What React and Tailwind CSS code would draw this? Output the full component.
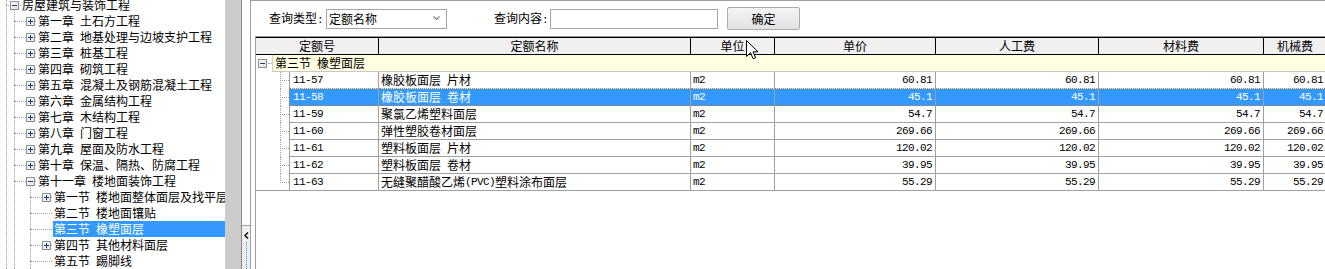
import React from 'react';

const MONO = "font-['Liberation_Mono',monospace] text-[11px] tracking-[-0.6px]";

function Txt({ children }) {
  const parts = String(children).split(/([\x20-\x7e]+)/).filter(Boolean);
  return parts.map((p, i) =>
    /^[\x20-\x7e]+$/.test(p) ? (
      <span key={i} className={`${MONO} whitespace-pre`}>{p}</span>
    ) : (
      <span key={i}>{p}</span>
    )
  );
}

function Box({ minus }) {
  return (
    <svg width="9" height="9" viewBox="0 0 9 9" className="relative shrink-0">
      <defs>
        <linearGradient id="bx" x1="0" y1="0" x2="1" y2="1">
          <stop offset="0" stopColor="#ffffff" />
          <stop offset="1" stopColor="#dcdcdc" />
        </linearGradient>
      </defs>
      <rect x="0.5" y="0.5" width="8" height="8" fill="url(#bx)" stroke="#8e8f8f" />
      <path d="M2 4.5h5" stroke="#1e3d7a" />
      {!minus && <path d="M4.5 2v5" stroke="#1e3d7a" />}
    </svg>
  );
}

const tree = [
  { lv: 0, kind: 'minus', label: '房屋建筑与装饰工程' },
  { lv: 1, kind: 'plus', label: '第一章 土石方工程' },
  { lv: 1, kind: 'plus', label: '第二章 地基处理与边坡支护工程' },
  { lv: 1, kind: 'plus', label: '第三章 桩基工程' },
  { lv: 1, kind: 'plus', label: '第四章 砌筑工程' },
  { lv: 1, kind: 'plus', label: '第五章 混凝土及钢筋混凝土工程' },
  { lv: 1, kind: 'plus', label: '第六章 金属结构工程' },
  { lv: 1, kind: 'plus', label: '第七章 木结构工程' },
  { lv: 1, kind: 'plus', label: '第八章 门窗工程' },
  { lv: 1, kind: 'plus', label: '第九章 屋面及防水工程' },
  { lv: 1, kind: 'plus', label: '第十章 保温、隔热、防腐工程' },
  { lv: 1, kind: 'minus', label: '第十一章 楼地面装饰工程' },
  { lv: 2, kind: 'plus', label: '第一节 楼地面整体面层及找平层' },
  { lv: 2, kind: 'leaf', label: '第二节 楼地面镶贴' },
  { lv: 2, kind: 'leaf', label: '第三节 橡塑面层', sel: true },
  { lv: 2, kind: 'plus', label: '第四节 其他材料面层' },
  { lv: 2, kind: 'leaf', label: '第五节 踢脚线' },
];

function TreeRow({ lv, kind, label, sel }) {
  const pad = ['pl-[10px]', 'pl-[26px]', 'pl-[42px]'][lv];
  const conn = ['left-[6px] w-[15px]', 'left-[14px] w-[24px]', 'left-[30px] w-[24px]'][lv];
  return (
    <div className={`relative h-[16px] flex items-center ${pad}`}>
      <span className={`absolute top-[8px] border-t border-dotted border-[#a0a0a0] ${conn}`} />
      {kind === 'leaf' ? <span className="w-[9px] shrink-0" /> : <Box minus={kind === 'minus'} />}
      <span
        className={`relative ml-[2px] pl-[1px] h-[16px] leading-[16px] whitespace-nowrap ${
          sel ? 'flex-1 bg-[#3399ff] text-white' : 'bg-white text-black'
        }`}
      >
        <Txt>{label}</Txt>
      </span>
    </div>
  );
}

const rows = [
  ['11-57', '橡胶板面层 片材', 'm2', '60.81'],
  ['11-58', '橡胶板面层 卷材', 'm2', '45.1'],
  ['11-59', '聚氯乙烯塑料面层', 'm2', '54.7'],
  ['11-60', '弹性塑胶卷材面层', 'm2', '269.66'],
  ['11-61', '塑料板面层 片材', 'm2', '120.02'],
  ['11-62', '塑料板面层 卷材', 'm2', '39.95'],
  ['11-63', '无缝聚醋酸乙烯(PVC)塑料涂布面层', 'm2', '55.29'],
];

function DataRow({ r, sel, focusBelow, last }) {
  const bb = sel || focusBelow
    ? 'border-b-[#c27a3a] [border-bottom-style:dotted]'
    : 'border-b-[#a0a0a0]';
  const bg = sel ? 'bg-[#3399ff] text-white' : 'bg-white text-black';
  const cell = `h-full shrink-0 border-b border-r border-r-[#a0a0a0] flex items-center ${bb} ${bg}`;
  return (
    <div className="flex h-[17px]">
      <div className={`relative w-[33px] h-full shrink-0 ${last ? 'border-b border-[#a0a0a0]' : ''}`}>
        <span
          className={`absolute left-[24px] top-0 border-l border-dotted border-[#a0a0a0] ${
            last ? 'h-[9px]' : 'h-[17px]'
          }`}
        />
        <span className="absolute left-[24px] top-[8px] w-[9px] border-t border-dotted border-[#a0a0a0]" />
      </div>
      <div
        className={`${cell} w-[90px] border-l pl-[3px] ${
          sel ? 'border-l-[#c27a3a] [border-left-style:dotted]' : 'border-l-[#a0a0a0]'
        }`}
      >
        <Txt>{r[0]}</Txt>
      </div>
      <div className={`${cell} w-[312px] pl-[2px] whitespace-nowrap`}>
        <Txt>{r[1]}</Txt>
      </div>
      <div className={`${cell} w-[84px] pl-[2px]`}>
        <Txt>{r[2]}</Txt>
      </div>
      <div className={`${cell} w-[161px] justify-end pr-[3px]`}>
        <Txt>{r[3]}</Txt>
      </div>
      <div className={`${cell} w-[163px] justify-end pr-[3px]`}>
        <Txt>{r[3]}</Txt>
      </div>
      <div className={`${cell} w-[165px] justify-end pr-[3px]`}>
        <Txt>{r[3]}</Txt>
      </div>
      <div className={`${cell} w-[63px] justify-end pr-[3px]`}>
        <Txt>{r[3]}</Txt>
      </div>
    </div>
  );
}

const headers = [
  ['定额号', 'w-[123px]'],
  ['定额名称', 'w-[312px]'],
  ['单位', 'w-[84px]'],
  ['单价', 'w-[161px]'],
  ['人工费', 'w-[163px]'],
  ['材料费', 'w-[165px]'],
  ['机械费', 'w-[63px]'],
];

export default function App() {
  return (
    <div className="relative w-[1325px] h-[269px] flex overflow-hidden bg-white text-[12px] leading-[16px] text-black font-['Noto_Sans_CJK_SC','Noto_Sans',sans-serif]">
      {/* Left tree */}
      <div className="relative w-[225px] h-full shrink-0 overflow-hidden bg-white">
        <span className="absolute left-[6px] top-0 bottom-0 border-l border-dotted border-[#a0a0a0]" />
        <span className="absolute left-[14px] top-[9px] bottom-0 border-l border-dotted border-[#a0a0a0]" />
        <span className="absolute left-[30px] top-[185px] bottom-0 border-l border-dotted border-[#a0a0a0]" />
        <div className="-mt-[3px]">
          {tree.map((t, i) => (
            <TreeRow key={i} {...t} />
          ))}
        </div>
      </div>

      {/* grey strip */}
      <div className="w-[16px] h-full shrink-0 bg-[#cccccc]" />

      {/* splitter */}
      <div className="w-[10px] h-full shrink-0 flex flex-col border-l border-l-[#8a8a8a] border-r border-r-[#a0a0a0] bg-white">
        <div className="h-[225px] shrink-0" />
        <div className="flex-1 flex flex-col items-center border-t border-[#a0a0a0] bg-[#efefef]">
          <svg width="5" height="7" viewBox="0 0 5 7" className="mt-[6px]">
            <path d="M4 0.5L1 3.5L4 6.5" fill="none" stroke="#000" strokeWidth="1.4" />
          </svg>
          <div className="mt-[3px] flex-1 border-l border-dotted border-[#3399ff]" />
        </div>
      </div>

      {/* Right panel */}
      <div className="flex-1 min-w-0 h-full flex flex-col border-t border-[#a0a0a0] overflow-hidden">
        <div className="h-[35px] shrink-0 flex items-center">
          <span className="ml-[18px] w-[57px] shrink-0 whitespace-nowrap">
            <Txt>查询类型:</Txt>
          </span>
          <div className="w-[121px] h-[20px] shrink-0 border border-[#a5a5a5] bg-white flex items-center pl-[2px] pr-[6px]">
            <span className="flex-1">定额名称</span>
            <svg width="7" height="5" viewBox="0 0 7 5">
              <path d="M0.5 0.5L3.5 3.5L6.5 0.5" fill="none" stroke="#808080" strokeWidth="1.2" />
            </svg>
          </div>
          <span className="ml-[47px] w-[56px] shrink-0 whitespace-nowrap">
            <Txt>查询内容:</Txt>
          </span>
          <div className="w-[168px] h-[20px] shrink-0 border border-[#a5a5a5] bg-white" />
          <button className="ml-[9px] w-[73px] h-[23px] shrink-0 border border-[#acacac] rounded-[2px] bg-gradient-to-b from-[#f4f4f4] to-[#e2e2e2] flex items-center justify-center text-[12px] leading-[16px]">
            确定
          </button>
        </div>

        <div className="flex-1 ml-[4px] border-l border-t border-l-[#a0a0a0] border-t-[#9a9a9a] overflow-hidden">
          <div className="flex h-[18px] -ml-px border-l border-t border-b border-black bg-[#f0f0f0]">
            {headers.map(([h, w], i) => (
              <div key={i} className={`${w} h-full shrink-0 border-r border-black flex items-center justify-center`}>
                {h}
              </div>
            ))}
          </div>

          <div className="flex h-[17px]">
            <div className="relative w-[16px] h-full shrink-0 flex items-center pl-[2px]">
              <Box minus />
              <span className="ml-px w-[5px] border-t border-dotted border-[#a0a0a0]" />
            </div>
            <div className="flex-1 h-full border-l border-b border-l-[#d6d3b5] border-b-[#c8c8c8] bg-[#ffffe1] pl-[2px] flex items-center whitespace-nowrap">
              <Txt>第三节 橡塑面层</Txt>
            </div>
          </div>

          {rows.map((r, i) => (
            <DataRow key={i} r={r} sel={i === 1} focusBelow={i === 0} last={i === rows.length - 1} />
          ))}
        </div>
      </div>

      {/* mouse cursor */}
      <svg width="13" height="20" viewBox="0 0 13 20" className="absolute left-[746px] top-[40px]">
        <path
          d="M0.5 0.5L0.5 16.5L4.5 12.8L7.2 18.8L9.6 17.8L7 11.8L12 11.8Z"
          fill="#ffffff"
          stroke="#000000"
          strokeWidth="1"
        />
      </svg>
    </div>
  );
}
